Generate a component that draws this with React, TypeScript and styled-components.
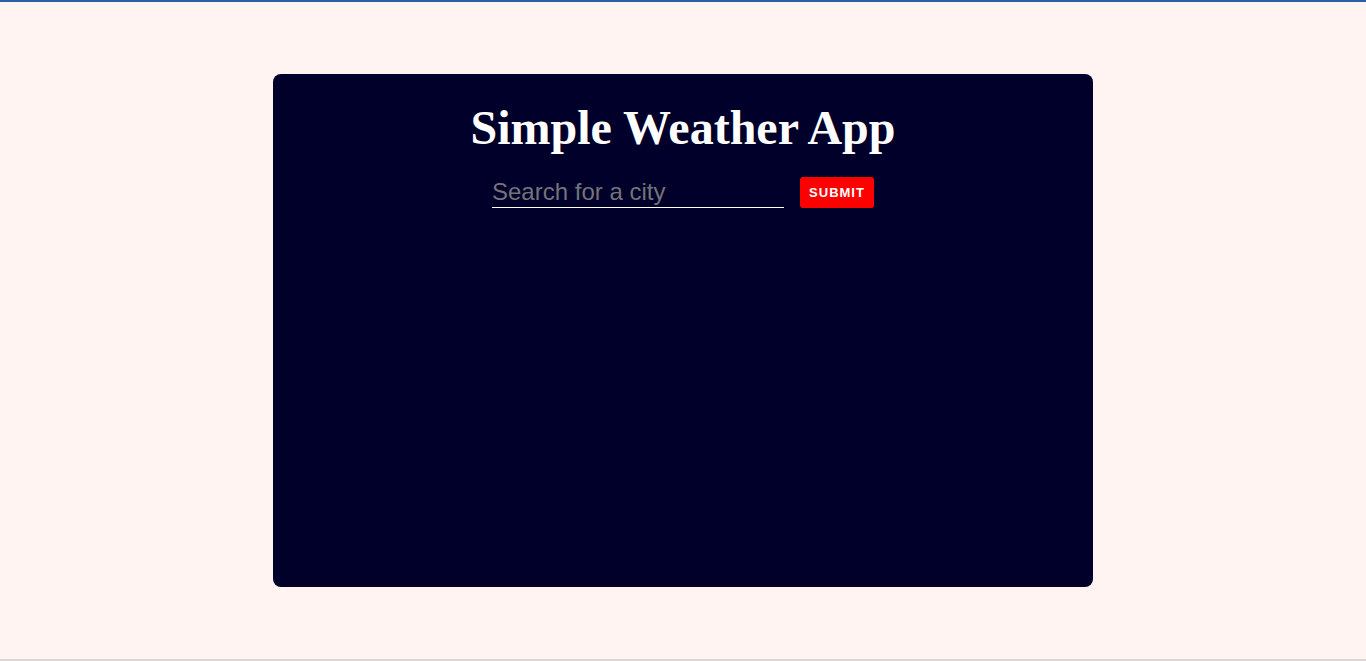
import { useState } from 'react';
import styled, { createGlobalStyle } from 'styled-components';

const GlobalStyle = createGlobalStyle`
    html, body {
        margin: 0;
        padding: 0;
        background: #fff4f2;
    }
    body {
        border-top: 2px solid #2a5ea5;
        border-bottom: 2px solid #d8d6d6;
        box-sizing: border-box;
        min-height: 661px;
    }
`;

const Page = styled.main`
    display: flex;
    justify-content: center;
    padding-top: 72px;
`;

const Card = styled.section`
    width: 820px;
    height: 513px;
    background: #00002a;
    border-radius: 8px;
    display: flex;
    flex-direction: column;
    align-items: center;
    box-sizing: border-box;
    padding-top: 26px;
`;

const Title = styled.h1`
    margin: 0;
    color: #ffffff;
    font-family: "Liberation Serif", "Times New Roman", serif;
    font-weight: 700;
    font-size: 48px;
    line-height: 56px;
`;

const SearchForm = styled.form`
    display: flex;
    align-items: flex-end;
    gap: 16px;
    margin-top: 20px;
`;

const SearchInput = styled.input`
    width: 292px;
    height: 31px;
    padding: 0;
    border: none;
    border-bottom: 1px solid #ffffff;
    background: transparent;
    color: #ffffff;
    font-family: "Liberation Sans", Arial, sans-serif;
    font-size: 24px;
    outline: none;

    &::placeholder {
        color: #737378;
    }
`;

const SubmitButton = styled.button`
    width: 74px;
    height: 31px;
    border: none;
    border-radius: 3px;
    background: #ff0000;
    color: #ffffff;
    font-family: "Liberation Sans", Arial, sans-serif;
    font-weight: 700;
    font-size: 13px;
    letter-spacing: 1px;
    cursor: pointer;
`;

const App = () => {
    const [city, setCity] = useState('');

    return (
        <>
            <GlobalStyle />
            <Page>
                <Card>
                    <Title>Simple Weather App</Title>
                    <SearchForm onSubmit={(e) => e.preventDefault()}>
                        <SearchInput
                            type="text"
                            placeholder="Search for a city"
                            value={city}
                            onChange={(e) => setCity(e.target.value)}
                        />
                        <SubmitButton type="submit">SUBMIT</SubmitButton>
                    </SearchForm>
                </Card>
            </Page>
        </>
    );
};

export default App;
